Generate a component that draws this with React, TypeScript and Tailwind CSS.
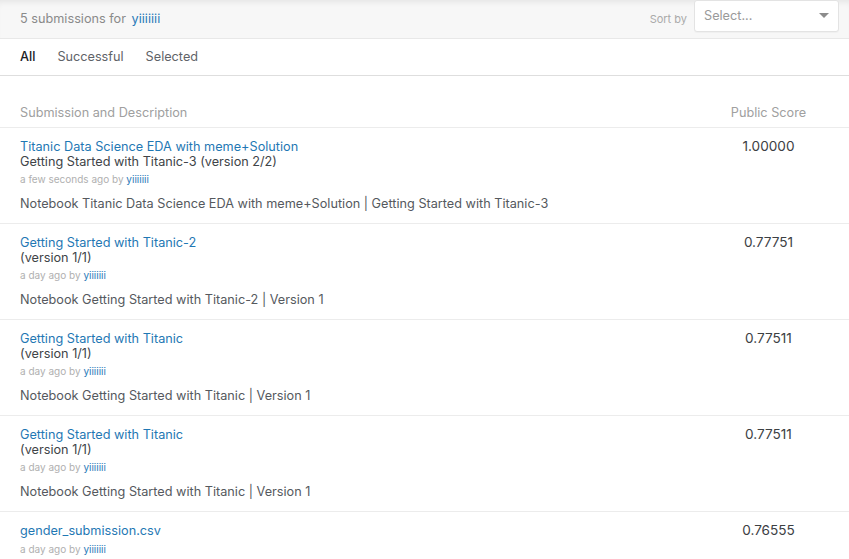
type Sub = {
  title: string;
  subtitle: string;
  when: string;
  desc?: string;
  score: string;
};

const subs: Sub[] = [
  {
    title: "Titanic Data Science EDA with meme+Solution",
    subtitle: "Getting Started with Titanic-3 (version 2/2)",
    when: "a few seconds ago",
    desc: "Notebook Titanic Data Science EDA with meme+Solution | Getting Started with Titanic-3",
    score: "1.00000",
  },
  {
    title: "Getting Started with Titanic-2",
    subtitle: "(version 1/1)",
    when: "a day ago",
    desc: "Notebook Getting Started with Titanic-2 | Version 1",
    score: "0.77751",
  },
  {
    title: "Getting Started with Titanic",
    subtitle: "(version 1/1)",
    when: "a day ago",
    desc: "Notebook Getting Started with Titanic | Version 1",
    score: "0.77511",
  },
  {
    title: "Getting Started with Titanic",
    subtitle: "(version 1/1)",
    when: "a day ago",
    desc: "Notebook Getting Started with Titanic | Version 1",
    score: "0.77511",
  },
  {
    title: "gender_submission.csv",
    subtitle: "",
    when: "a day ago",
    score: "0.76555",
  },
];

export default function App() {
  return (
    <div className="w-[849px] h-[559px] overflow-hidden bg-white font-['Inter',sans-serif] text-[12.7px]">
      {/* top bar */}
      <div className="h-[39px] bg-[#f7f7f7] shadow-[inset_0_6px_6px_-4px_rgba(0,0,0,0.08)] border-b border-[#e8e8e8] flex items-center justify-between pl-5 pr-[10px]">
        <div className="text-[#8a8a8a]">
          5 submissions for <span className="text-[#2b7bb9] ml-[2px]">yiiiiiii</span>
        </div>
        <div className="flex items-center gap-[7px]">
          <span className="text-[11px] text-[#aaa]">Sort by</span>
          <div className="w-[145px] h-[32px] -mt-[6px] bg-white border border-[#e3e3e3] rounded-[3px] flex items-center justify-between pl-[9px] pr-[8px] shadow-[0_1px_1px_rgba(0,0,0,0.03)]">
            <span className="text-[#9a9a9a]">Select...</span>
            <svg width="10" height="6" viewBox="0 0 10 6" className="mr-[1px]">
              <path d="M0 0 L10 0 L5 5 Z" fill="#8c8c8c" />
            </svg>
          </div>
        </div>
      </div>

      {/* tabs */}
      <div className="h-[37px] border-b border-[#dedede] flex items-center gap-[22px] pl-5">
        <span className="text-[#202124] font-medium">All</span>
        <span className="text-[#5f6368]">Successful</span>
        <span className="text-[#5f6368]">Selected</span>
      </div>

      {/* header */}
      <div className="mt-[27px] h-[25px] border-b border-[#ececec] flex items-start justify-between pl-5 pr-[25px]">
        <span className="text-[#a0a0a0]">Submission and Description</span>
        <span className="w-[111px] text-center text-[#a0a0a0]">Public Score</span>
      </div>

      {subs.map((s, i) => (
        <div key={i} className="h-[96px] border-b border-[#ececec] flex justify-between pl-5 pr-[25px] pt-[11px]">
          <div className="flex flex-col">
            <span className="text-[#1f78b4] leading-[16px]">{s.title}</span>
            {s.subtitle && <span className="text-[#404448] leading-[14px]">{s.subtitle}</span>}
            <span className="text-[10px] text-[#b0b0b0] leading-[14px] mt-[3px]">
              {s.when} by <span className="text-[#2b7bb9]">yiiiiiii</span>
            </span>
            {s.desc && <span className="text-[#55595e] mt-[10px] leading-[16px]">{s.desc}</span>}
          </div>
          <div className="w-[111px] -mt-[1px] text-center text-[13.6px] text-[#3c4043] leading-[16px]">{s.score}</div>
        </div>
      ))}
    </div>
  );
}
